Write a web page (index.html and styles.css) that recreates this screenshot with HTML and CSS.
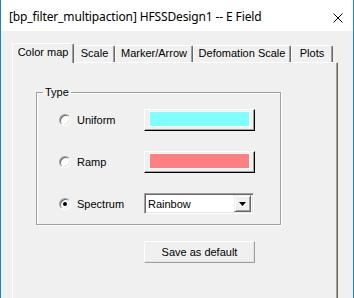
FILE: index.html
```html
<!DOCTYPE html>
<html>
<head>
<meta charset="utf-8">
<link rel="stylesheet" href="styles.css">
</head>
<body>
<div class="window">
  <div class="titlebar">
    <span class="title">[bp_filter_multipaction] HFSSDesign1 -- E Field</span>
    <svg class="close" width="10" height="10" viewBox="0 0 10 10"><path d="M0.5 0.5 L9.5 9.5 M9.5 0.5 L0.5 9.5" stroke="#000" stroke-width="1" fill="none"/></svg>
  </div>
  <div class="main">
    <div class="tabs">
      <div class="tab tab-selected tab-color">Color map</div>
      <div class="tab tab-scale">Scale</div>
      <div class="tab tab-marker">Marker/Arrow</div>
      <div class="tab tab-deform">Defomation Scale</div>
      <div class="tab tab-plots">Plots</div>
    </div>
    <div class="panel">
      <fieldset class="group">
        <legend class="group-label">Type</legend>
        <div class="rows">
          <label class="radio-item"><span class="radio"></span><span>Uniform</span></label>
          <button class="color-btn"><span class="swatch swatch-cyan"></span></button>
          <label class="radio-item"><span class="radio"></span><span>Ramp</span></label>
          <button class="color-btn"><span class="swatch swatch-red"></span></button>
          <label class="radio-item"><span class="radio radio-on"></span><span>Spectrum</span></label>
          <div class="combo">
            <span class="combo-text">Rainbow</span>
            <span class="combo-btn"><svg width="7" height="4" viewBox="0 0 7 4"><path d="M0 0 H7 L3.5 4 Z" fill="#000"/></svg></span>
          </div>
        </div>
      </fieldset>
      <button class="save-btn">Save as default</button>
    </div>
  </div>
</div>
</body>
</html>
```
FILE: styles.css
```css
html, body {
  margin: 0;
  padding: 0;
  background: #f0f0f0;
}
.window {
  width: 354px;
  height: 298px;
  box-sizing: border-box;
  border-left: 1px solid #1883d7;
  border-right: 1px solid #1883d7;
  background: #f0f0f0;
  overflow: hidden;
  font-family: "Liberation Sans", Arial, sans-serif;
  font-size: 11px;
  color: #000;
}
.titlebar {
  height: 31px;
  background: #fff;
  display: flex;
  align-items: center;
  justify-content: space-between;
  padding: 0 10px 0 8px;
  box-sizing: border-box;
}
.title {
  font-family: "Noto Sans", sans-serif;
  font-size: 12px;
  letter-spacing: -0.13px;
  margin-top: 2px;
}
.close {
  display: block;
  margin-top: 4px;
}
.main {
  padding: 12px 15px 0 11px;
}
.tabs {
  display: flex;
  align-items: flex-end;
  height: 19px;
  position: relative;
  z-index: 1;
}
.tab {
  box-sizing: border-box;
  height: 17px;
  border-top: 1px solid #fff;
  border-left: 1px solid #fff;
  border-right: 1px solid #696969;
  box-shadow: inset -1px 0 0 #a0a0a0;
  border-radius: 2px 2px 0 0;
  text-align: center;
  line-height: 15px;
  background: #f0f0f0;
}
.tab-selected {
  height: 20px;
  margin-bottom: -1px;
  line-height: 17px;
}
.tab-color { width: 62px; }
.tab-scale { width: 41px; border-left-color: #f0f0f0; }
.tab-marker { width: 78px; }
.tab-deform { width: 98px; }
.tab-plots { width: 42px; }
.panel {
  height: 260px;
  box-sizing: border-box;
  border-top: 1px solid #fff;
  border-left: 1px solid #fff;
  border-right: 1px solid #696969;
  box-shadow: inset -1px 0 0 #a0a0a0;
  padding: 23px 0 0 23px;
}
.group {
  margin: 0;
  padding: 0;
  width: 245px;
  box-sizing: border-box;
  border: 1px solid #a0a0a0;
  box-shadow: inset 1px 1px 0 #fff, 1px 1px 0 #fff;
}
.group-label {
  margin-left: 6px;
  padding: 0 2px;
  line-height: 12px;
}
.rows {
  display: grid;
  grid-template-columns: 85px 111px;
  grid-template-rows: 22px 22px 21px;
  row-gap: 20px;
  align-items: center;
  padding: 11px 0 10px 22px;
}
.radio-item {
  display: flex;
  align-items: center;
  gap: 6px;
}
.radio {
  width: 12px;
  height: 12px;
  box-sizing: border-box;
  border-radius: 50%;
  border: 1px solid;
  border-color: #a0a0a0 #fff #fff #a0a0a0;
  box-shadow: inset 1px 1px 0 #696969, inset -1px -1px 0 #e3e3e3;
  background: #fff;
  position: relative;
}
.radio-on::after {
  content: "";
  position: absolute;
  left: 3px;
  top: 3px;
  width: 4px;
  height: 4px;
  border-radius: 50%;
  background: #000;
}
.color-btn {
  width: 111px;
  height: 22px;
  box-sizing: border-box;
  margin: 0;
  padding: 1px 4px 3px 4px;
  border: 1px solid;
  border-color: #fff #000 #000 #fff;
  box-shadow: inset -1px -1px 0 #a0a0a0;
  background: #f0f0f0;
  display: flex;
}
.swatch {
  flex: 1;
  border: 1px solid #fff;
}
.swatch-cyan { background: #80ffff; }
.swatch-red { background: #ff8080; }
.combo {
  width: 110px;
  height: 21px;
  box-sizing: border-box;
  border: 1px solid;
  border-color: #a0a0a0 #fff #fff #a0a0a0;
  box-shadow: inset 1px 1px 0 #696969, inset -1px -1px 0 #e3e3e3;
  background: #fff;
  display: flex;
  align-items: center;
  justify-content: space-between;
  padding: 2px;
}
.combo-text {
  padding-left: 1px;
}
.combo-btn {
  width: 17px;
  height: 17px;
  box-sizing: border-box;
  border: 1px solid;
  border-color: #f0f0f0 #696969 #696969 #f0f0f0;
  box-shadow: inset 1px 1px 0 #fff, inset -1px -1px 0 #a0a0a0;
  background: #f0f0f0;
  display: flex;
  align-items: center;
  justify-content: center;
}
.combo-btn svg {
  display: block;
}
.save-btn {
  display: block;
  margin: 16px 0 0 108px;
  width: 111px;
  height: 22px;
  box-sizing: border-box;
  padding: 0;
  border: 1px solid;
  border-color: #fff #a0a0a0 #a0a0a0 #fff;
  box-shadow: inset -1px -1px 0 #e3e3e3;
  background: #f0f0f0;
  font-family: "Liberation Sans", Arial, sans-serif;
  font-size: 11px;
  color: #000;
}
```
